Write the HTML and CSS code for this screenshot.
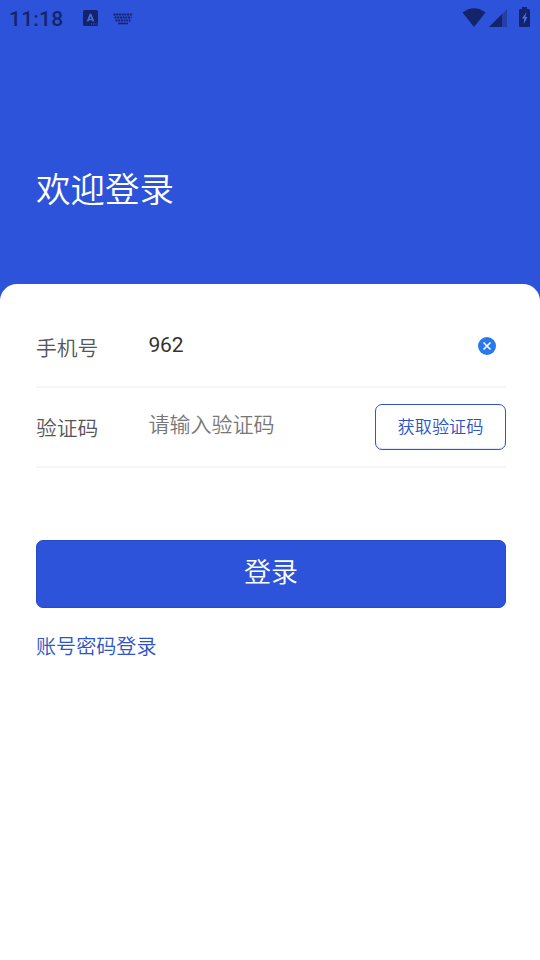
FILE: index.html
```html
<!DOCTYPE html>
<html lang="zh-CN">
<head>
<meta charset="utf-8">
<title>登录</title>
<link rel="stylesheet" href="styles.css">
</head>
<body>
<header class="hero">
  <div class="status">
    <span class="time">11:18</span>
    <svg class="ime" width="15" height="16" viewBox="0 0 15 16"><path fill="#14246b" d="M1.500 0h12A1.500 1.500 0 0 1 15 1.500v13a1.500 1.500 0 0 1-1.500 1.500h-12A1.500 1.500 0 0 1 0 14.500v-13A1.500 1.500 0 0 1 1.500 0z"/><path d="M4.500 11.500L7.300 4.500h.4l2.800 7M5.500 9.500h4" fill="none" stroke="#4a69dc" stroke-width="1.700"/><path d="M8 14h1m1.200 0h1m1.200 0h1" stroke="#4a69dc"/></svg>
    <svg class="keyboard" width="20" height="12" viewBox="0 0 20 12" fill="none" stroke="#14246b" stroke-width="2"><path stroke-dasharray="2 .7" d="M.5 1.500h19M1.500 4.500h17M2.500 7.500h15"/><path d="M5 10.500h10" stroke-width="1.600"/></svg>
    <span class="space"></span>
    <svg class="wifi" width="24" height="20" viewBox="0 0 24 20"><path fill="#14246b" d="M.5 4.500Q12-4 23.500 4.500L12 19z"/></svg>
    <svg class="signal" width="18" height="18" viewBox="0 0 18 18"><path fill="#2440a6" d="M13 5l5-5v18h-5z"/><path fill="#14246b" d="M0 18L13 5v13z"/></svg>
    <svg class="battery" width="11" height="20" viewBox="0 0 11 20"><path fill="#14246b" d="M3 0h5v2H9.500Q11 2 11 3.500v15Q11 20 9.500 20h-8Q0 20 0 18.500v-15Q0 2 1.500 2H3z"/><path fill="#4e6fe0" d="M7.500 5L3 11.500h2.200L4.700 17 8.500 10H6.300z"/></svg>
  </div>
  <h1>欢迎登录</h1>
</header>
<main class="card">
  <div class="row phone">
    <span class="label">手机号</span>
    <span class="value number">962</span>
    <svg class="clear" width="18" height="18" viewBox="0 0 18 18"><circle cx="9" cy="9" r="9" fill="#2878f0"/><path d="M5.500 5.500l7 7m0-7l-7 7" stroke="#fff" stroke-width="1.600"/></svg>
  </div>
  <div class="row code">
    <span class="label">验证码</span>
    <span class="value hint">请输入验证码</span>
    <button class="send">获取验证码</button>
  </div>
  <button class="login">登录</button>
  <a class="switch">账号密码登录</a>
</main>
</body>
</html>
```
FILE: styles.css
```css
* { box-sizing: border-box; }
body {
  margin: 0;
  height: 960px;
  overflow: hidden;
  background: #fff;
  font-family: Roboto, "Noto Sans CJK SC", sans-serif;
  font-weight: 350;
}
.hero {
  height: 304px;
  background: #2d53da;
}
.status {
  display: flex;
  height: 36px;
  padding: 0 10px 0 9px;
  align-items: center;
  color: #14246b;
}
.time {
  width: 74px;
  font-size: 21px;
  font-weight: 500;
  letter-spacing: .2px;
  line-height: 36px;
  padding-top: 1px;
}
.keyboard { margin-left: 15px; margin-top: 1px; }
.space { flex: 1; }
.wifi { margin-right: 3px; }
.signal { margin-right: 12px; }
.battery { margin-bottom: 2px; }
h1 {
  margin: 129px 0 0 36px;
  color: #fff;
  font-size: 34.5px;
  font-weight: 350;
  line-height: 50px;
}
.card {
  height: 676px;
  margin-top: -20px;
  padding: 24px 34px 0 36px;
  border-radius: 17px 17px 0 0;
  background: #fff;
}
.row {
  display: flex;
  height: 80px;
  align-items: center;
  border-bottom: 2px solid #f6f6f6;
}
.label {
  width: 112.5px;
  color: #55565a;
  font-size: 20.8px;
}
.phone .label { padding-bottom: 1px; }
.value {
  flex: 1;
  color: #333;
  font-size: 21px;
  padding-bottom: 8px;
}
.number {
  padding-bottom: 4px;
  font-weight: 400;
  letter-spacing: -.2px;
}
.hint { color: #777; }
.clear { margin: 0 10.5px 2px 0; }
button {
  padding: 0;
  font-family: inherit;
  font-weight: inherit;
}
.send {
  width: 131px;
  height: 46px;
  padding-bottom: 4px;
  border: 1.500px solid #3157c5;
  border-radius: 7px;
  background: #fff;
  box-shadow: inset 0 -1px 1px #dfe5fa;
  color: #2d53c8;
  font-size: 17.2px;
}
.login {
  display: block;
  width: 470px;
  height: 68px;
  margin-top: 72px;
  padding-bottom: 8px;
  border: 1px solid #284bc4;
  border-radius: 7px;
  background: #2d53da;
  color: #fff;
  font-size: 27px;
}
.switch {
  display: block;
  margin-top: 24px;
  color: #2d53c8;
  font-size: 20.1px;
  line-height: 30px;
}
```
